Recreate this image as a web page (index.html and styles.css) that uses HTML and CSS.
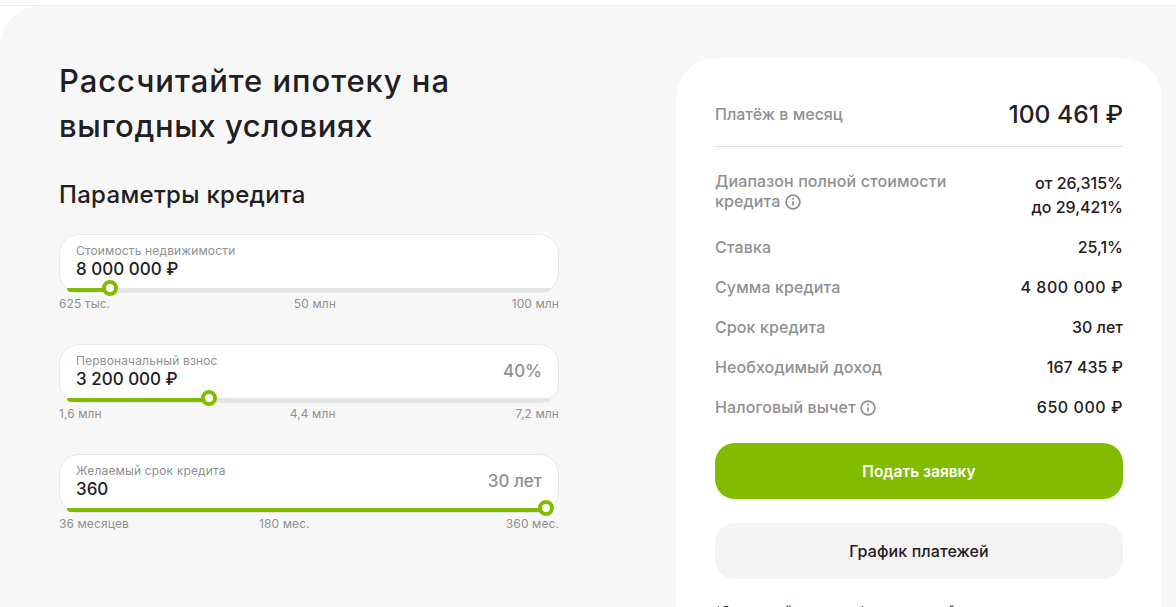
FILE: index.html
```html
<!DOCTYPE html>
<html lang="ru">
<head>
<meta charset="utf-8">
<title>Ипотека</title>
<link rel="stylesheet" href="styles.css">
</head>
<body>
<div class="topbar"></div>
<main class="panel">
  <section class="params">
    <h1 class="title">Рассчитайте ипотеку на <span class="title-end">выгодных условиях</span></h1>
    <h2 class="subtitle">Параметры кредита</h2>

    <div class="slider">
      <div class="field">
        <div class="field-text">
          <div class="field-label">Стоимость недвижимости</div>
          <div class="field-value">8 000 000 ₽</div>
        </div>
      </div>
      <div class="track"><div class="fill" style="width:43px"><span class="thumb"></span></div></div>
      <div class="scale"><span>625 тыс.</span><span class="mid-a">50 млн</span><span>100 млн</span></div>
    </div>

    <div class="slider">
      <div class="field">
        <div class="field-text">
          <div class="field-label">Первоначальный взнос</div>
          <div class="field-value">3 200 000 ₽</div>
        </div>
        <div class="field-side">40%</div>
      </div>
      <div class="track"><div class="fill" style="width:142px"><span class="thumb"></span></div></div>
      <div class="scale"><span>1,6 млн</span><span class="mid-a">4,4 млн</span><span>7,2 млн</span></div>
    </div>

    <div class="slider">
      <div class="field">
        <div class="field-text">
          <div class="field-label">Желаемый срок кредита</div>
          <div class="field-value">360</div>
        </div>
        <div class="field-side">30 лет</div>
      </div>
      <div class="track"><div class="fill" style="width:479px"><span class="thumb"></span></div></div>
      <div class="scale"><span>36 месяцев</span><span class="mid-b">180 мес.</span><span>360 мес.</span></div>
    </div>
  </section>

  <aside class="card">
    <div class="pay">
      <span class="pay-label">Платёж в месяц</span>
      <span class="pay-value">100 461 ₽</span>
    </div>
    <dl class="rows">
      <div class="row row-tall">
        <dt>Диапазон полной стоимости<br>кредита <svg class="info" viewBox="0 0 16 16"><circle cx="8" cy="8" r="6.9"/><path d="M8 7.2v4.2"/><circle class="dot" cx="8" cy="4.8" r="1"/></svg></dt>
        <dd>от 26,315%<br>до 29,421%</dd>
      </div>
      <div class="row"><dt>Ставка</dt><dd>25,1%</dd></div>
      <div class="row"><dt>Сумма кредита</dt><dd class="money">4 800 000 ₽</dd></div>
      <div class="row"><dt>Срок кредита</dt><dd>30 лет</dd></div>
      <div class="row"><dt>Необходимый доход</dt><dd>167 435 ₽</dd></div>
      <div class="row"><dt>Налоговый вычет <svg class="info" viewBox="0 0 16 16"><circle cx="8" cy="8" r="6.9"/><path d="M8 7.2v4.2"/><circle class="dot" cx="8" cy="4.8" r="1"/></svg></dt><dd class="money">650 000 ₽</dd></div>
    </dl>
    <button class="btn btn-primary" type="button">Подать заявку</button>
    <button class="btn btn-secondary" type="button">График платежей</button>
    <p class="note">*Этот расчёт носит информационный характер</p>
  </aside>
</main>
</body>
</html>
```
FILE: styles.css
```css
* { box-sizing: border-box; }
html, body { margin: 0; height: 100%; overflow: hidden; background: #fff; }
body { font-family: Inter, "Noto Sans", sans-serif; color: #1f2022; }

.topbar { height: 6px; border-bottom: 1px solid #e9eaea; }

.panel {
  height: 601px;
  background: #f7f7f7;
  border-top-left-radius: 40px;
  padding: 52px 14px 0 59px;
  display: flex;
  justify-content: space-between;
  align-items: flex-start;
  overflow: hidden;
}

.params { width: 500px; }
.title { margin: 0; width: 420px; font-size: 31px; line-height: 45px; font-weight: 500; letter-spacing: 0.95px; }
.title-end { letter-spacing: 0.6px; }
.subtitle { margin: 31px 0 23px; font-size: 24px; line-height: 32px; font-weight: 500; letter-spacing: 0.3px; }

.slider { margin-bottom: 32px; position: relative; }
.field {
  height: 59px;
  background: #fff;
  border: 1px solid #e7e8e8;
  border-radius: 20px;
  padding: 8px 16px 0;
  display: flex;
  justify-content: space-between;
  align-items: center;
}
.field-text { align-self: flex-start; }
.field-label { font-size: 12px; line-height: 16px; color: #8f9090; letter-spacing: 0.15px; }
.field-value { margin-top: 0; font-size: 17px; line-height: 20px; font-weight: 500; }
.field-side { font-size: 17px; color: #8f9090; font-weight: 500; margin-top: -14px; }

.track {
  height: 4px;
  margin: -5px 8px 0;
  background: #e3e4e4;
  position: relative;
  border-radius: 0 0 4px 4px;
}
.fill { height: 4px; background: #82bc00; border-radius: 0 0 0 4px; position: relative; }
.thumb {
  position: absolute;
  right: -8px;
  top: -8px;
  width: 16px;
  height: 16px;
  border-radius: 50%;
  background: #fff;
  border: 4px solid #82bc00;
}

.scale {
  display: flex;
  justify-content: space-between;
  margin-top: 4px;
  font-size: 12px;
  line-height: 16px;
  color: #8f9090;
  letter-spacing: 0.1px;
}
.scale .mid-a { margin-left: 8px; }
.scale .mid-b { margin-right: 66px; }

.card {
  width: 486px;
  height: 600px;
  background: #fff;
  border-radius: 40px 40px 0 0;
  padding: 38px 39px 0;
}
.pay {
  display: flex;
  justify-content: space-between;
  align-items: center;
  height: 36px;
  margin-bottom: 14px;
}
.pay-label { font-size: 16px; font-weight: 500; color: #8f9090; }
.pay-value { font-size: 24.6px; font-weight: 500; }

.rows { margin: 0; border-top: 1px solid #dedfdf; padding-top: 14px; }
.row {
  display: flex;
  justify-content: space-between;
  align-items: flex-start;
  height: 40px;
  font-size: 16px;
  line-height: 20px;
  padding-top: 10px;
  font-weight: 500;
}
.row-tall { height: 66px; }
.row dt { color: #8f9090; letter-spacing: 0.1px; }
.row dd { margin: 0; text-align: right; }
.row dd.money { letter-spacing: 0.55px; }
.row-tall dd { line-height: 24px; }

.info { width: 16px; height: 16px; vertical-align: -3px; fill: none; stroke: #8f9090; stroke-width: 1.7; }
.info .dot { fill: #8f9090; stroke: none; }

.btn {
  display: block;
  width: 100%;
  height: 56px;
  border: 0;
  border-radius: 20px;
  font-family: inherit;
  font-size: 15.5px;
  font-weight: 600;
}
.btn-primary { margin-top: 16px; background: #82bc00; color: #fff; }
.btn-secondary { margin-top: 24px; background: #f4f4f5; color: #1f2022; font-size: 16px; font-weight: 500; letter-spacing: 0.1px; }
.note { margin: 22px 0 0; font-size: 13px; line-height: 20px; }
```
